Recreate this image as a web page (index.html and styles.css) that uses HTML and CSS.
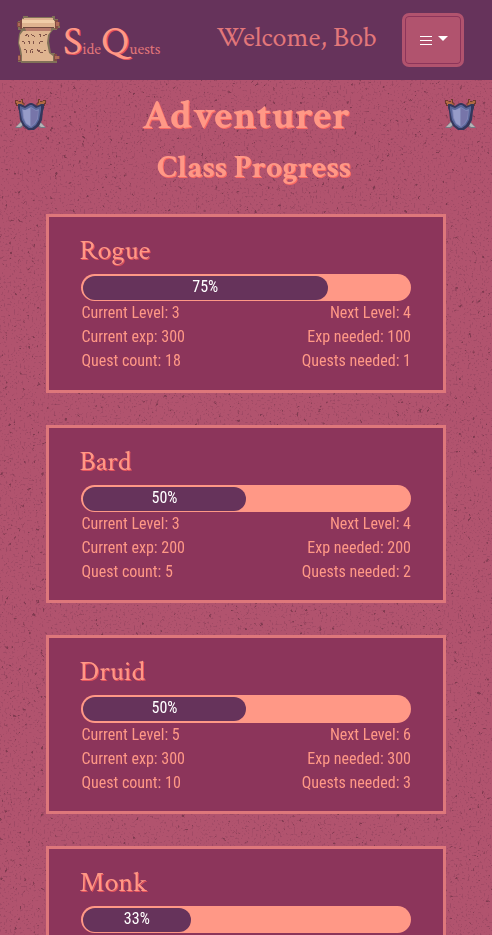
FILE: index.html
```html
<!DOCTYPE html>
<html lang="en">
<head>
<meta charset="utf-8">
<title>SideQuests</title>
<link rel="stylesheet" href="styles.css">
</head>
<body>
<svg class="texture" aria-hidden="true">
  <filter id="fine" x="0" y="0" width="100%" height="100%" color-interpolation-filters="sRGB">
    <feTurbulence type="fractalNoise" baseFrequency="0.5" numOctaves="3" seed="4"/>
    <feColorMatrix values="0 0 0 0 .55  0 0 0 0 .25  0 0 0 0 .36  6 0 0 0 -3.5"/>
  </filter>
  <filter id="coarse" x="0" y="0" width="100%" height="100%" color-interpolation-filters="sRGB">
    <feTurbulence type="fractalNoise" baseFrequency="0.22" numOctaves="4" seed="9"/>
    <feColorMatrix values="0 0 0 0 .44  0 0 0 0 .2  0 0 0 0 .28  10 0 0 0 -7.15"/>
  </filter>
  <rect width="100%" height="100%" filter="url(#fine)" opacity=".5"/>
  <rect width="100%" height="100%" filter="url(#coarse)" opacity=".75"/>
</svg>
<svg class="defs" aria-hidden="true">
  <symbol id="shield" viewBox="0 0 31 31">
    <path fill="#70392f" d="M0 1h3v1h3V0h2v3l2 2-4 4-3-2H1V5H0zM31 1h-3v1h-3V0h-2v3l-2 2 4 4 3-2h2V5h1z"/>
    <path fill="#b26b43" d="M1 2h2l1 1h2V1h1v3l2 1-3 3-2-2H2V4H1zM30 2h-2l-1 1h-2V1h-1v3l-2 1 3 3 2-2h2V4h1z"/>
    <path fill="#777783" d="M0 29l7-8 4 3-5 5zM31 29l-7-8-4 3 5 5z"/>
    <path fill="#b5b4b6" d="M1 28l6-6 3 2-5 4zM30 28l-6-6-3 2 5 4z"/>
    <path fill="#34375c" d="M3 5h3l4 2 3-2 2-1h2l2 1 3 2 4-2h3v4l-1 3-1 9-3 6-5 4h-6l-5-4-3-6-1-9-1-3z"/>
    <path fill="#59669a" d="M5 7l5 2 5-3h2l4 3 5-2v4l-2 10-3 5-4 3h-3l-4-3-3-5L5 11z"/>
    <path fill="#8286b6" d="M7 10l3 1 6-3 5 3 3-1-1 10-3 5-4 3-5-3-3-6z"/>
    <path fill="#969cc9" d="M8 11h3l4-2v18l-4-3-2-5z"/>
    <path fill="#7775a9" d="M16 9l5 3h2l-1 8-3 5-3 2z"/>
  </symbol>
</svg>

<header class="navbar">
  <a class="brand">
    <svg class="scroll" viewBox="0 0 44 47" aria-hidden="true">
      <path fill="#817158" d="M5 2h1V0h5v1h24V0h3v3h3v3h2v6h-3v2h-4l-3 4-1 7 2 12h4v3h2v7h-4v2H4v-3H1v-5h2v-5L1 27l1-9 2-4H1V5h4z"/>
      <path fill="#824c43" d="M3 4h2v9H3zM0 6h3v5H0zM38 4h3v2h2v4h-2v3h-3zM1 39h3v6H1zM37 38h3v2h3v3h-3v2h-3z"/>
      <path fill="#b06a59" d="M1 7h2v3H1zM39 6h3v4h-3zM1 40h2v4H1zM38 40h4v3h-4z"/>
      <path fill="#dfb490" d="M5 3h2V2h29v3h2v7H5zM6 15h28l-3 4-1 8 2 10 4 3v5H5v-6l-1-6-2-6 1-8z"/>
      <path fill="#f0cda8" d="M5 4h32v3H5z"/>
      <path fill="#70483f" d="M6 11h31v1H6z"/>
      <path fill="#b67a6b" d="M8 12h26v3H9z"/>
      <path fill="#805348" d="M8 19h2v1H8zM9 18h2v1H9zM11 19h1v2h-1zM14 18h1v1h-1zM15 19h2v1h-2zM17 20h1v1h-1zM22 18h2v1h-2zM23 19h1v2h-1zM26 19h2v1h-2zM28 18h2v1h-2zM5 25h2v1H5zM7 26h1v2H7zM11 25h2v1h-2zM12 26h1v2h-1zM16 25h1v3h-1zM22 26h1v2h-1zM23 25h3v1h-3zM7 33h2v1H7zM9 34h1v3H9zM13 34h1v3h-1zM14 33h2v1h-2zM15 35h1v2h-1zM20 33h1v2h-1zM21 34h2v2h-2zM23 36h3v1h-3zM27 34h2v1h-2z"/>
    </svg>
    <span class="wordmark"><b>S</b><span class="ide">ide</span><b class="q">Q</b><span class="uests">uests</span></span>
  </a>
  <span class="welcome">Welcome, Bob</span>
  <button class="menu" aria-label="Menu">
    <svg class="bars" viewBox="0 0 12 9" aria-hidden="true"><path d="M0 .5h12M0 4.5h12M0 8.5h12"/></svg>
    <span class="caret"></span>
  </button>
</header>

<main>
  <section class="hero">
    <svg class="shield"><use href="#shield"/></svg>
    <div class="titles">
      <h1>Adventurer</h1>
      <h2>Class Progress</h2>
    </div>
    <svg class="shield"><use href="#shield"/></svg>
  </section>

  <section class="cards">
    <article class="card">
      <h3>Rogue</h3>
      <div class="progress"><div class="fill" style="width:75%"><span>75%</span></div></div>
      <div class="stats"><p>Current Level: 3</p><p>Next Level: 4</p><p>Current exp: 300</p><p>Exp needed: 100</p><p>Quest count: 18</p><p>Quests needed: 1</p></div>
    </article>
    <article class="card">
      <h3>Bard</h3>
      <div class="progress"><div class="fill" style="width:50%"><span>50%</span></div></div>
      <div class="stats"><p>Current Level: 3</p><p>Next Level: 4</p><p>Current exp: 200</p><p>Exp needed: 200</p><p>Quest count: 5</p><p>Quests needed: 2</p></div>
    </article>
    <article class="card">
      <h3>Druid</h3>
      <div class="progress"><div class="fill" style="width:50%"><span>50%</span></div></div>
      <div class="stats"><p>Current Level: 5</p><p>Next Level: 6</p><p>Current exp: 300</p><p>Exp needed: 300</p><p>Quest count: 10</p><p>Quests needed: 3</p></div>
    </article>
    <article class="card">
      <h3>Monk</h3>
      <div class="progress"><div class="fill" style="width:33%"><span>33%</span></div></div>
    </article>
  </section>
</main>
</body>
</html>
```
FILE: styles.css
```css
* { box-sizing: border-box; }
html, body { height: 100%; }
body {
  margin: 0;
  overflow: hidden;
  background: #b1536e;
  color: #ff9886;
  font: 16px/24px "Roboto Condensed", Roboto, sans-serif;
  font-stretch: 75%;
}
h1, h2, h3, p { margin: 0; }
.texture { position: fixed; inset: 0; width: 100%; height: 100%; z-index: -1; }
.defs { position: absolute; width: 0; height: 0; }

.navbar {
  display: flex;
  align-items: center;
  height: 80px;
  padding: 0 28px 0 17px;
  background: #66335b;
  font-family: "Crimson Text", "Liberation Serif", serif;
  font-stretch: normal;
}
.brand { display: flex; align-items: center; width: 199.5px; }
.scroll { width: 44px; height: 47px; flex: none; margin-top: -2px; }
.wordmark { display: flex; align-items: baseline; margin-left: 2px; padding-top: 12px; font-size: 16px; line-height: 48px; }
.wordmark b { font-size: 40px; font-weight: 400; text-shadow: 1px 1px #e4545c; }
.wordmark .ide, .wordmark .uests { color: #e2777a; }
.welcome { width: 185.5px; padding-bottom: 4px; font-size: 28px; line-height: 34px; color: #e2777a; white-space: nowrap; }
.menu {
  display: flex;
  align-items: center;
  justify-content: center;
  gap: 6px;
  width: 62px;
  height: 54px;
  padding: 0 0 0 2px;
  border: 3px solid #b1536e;
  border-radius: 7px;
  background: #b1536e;
  box-shadow: inset 0 0 0 1px #8c355b;
}
.bars { width: 12px; height: 9px; fill: none; stroke: #fff; shape-rendering: crispEdges; }
.caret { margin-bottom: 4px; border: 5px solid transparent; border-top-color: #fff; border-bottom: 0; }

.hero { display: flex; justify-content: space-between; height: 134px; padding: 19px 16px 0 15px; }
.shield { width: 31px; height: 31px; flex: none; }
.titles { margin-top: -7px; text-align: center; font-family: "Crimson Text", "Liberation Serif", serif; font-stretch: normal; text-shadow: 1px 1px #fb6a63; }
h1 { padding-left: 1.5px; font-size: 40px; line-height: 48px; letter-spacing: .3px; }
h2 { margin-top: 9px; padding-left: 17px; font-size: 32px; line-height: 38px; }

.cards { display: flex; flex-direction: column; gap: 32px; width: 400px; margin: 0 auto; }
.card { height: 178.6px; flex: none; padding: 17px 32px 15px; border: 3px solid #de777b; background: #8c355b; }
.card h3 {
  margin: 0 0 6.6px -1.5px;
  font: 400 28px/33.6px "Crimson Text", "Liberation Serif", serif;
  text-shadow: 1px 1px #e4545c;
}
.progress { height: 27.2px; padding: 2px 2px 1px; border-radius: 14px; background: #ff9886; }
.fill { height: 24px; border-radius: 12px; background: #66335b; color: #fff; line-height: 22.2px; text-align: center; }
.stats { display: grid; grid-template-columns: 1fr 1fr; padding-left: .4px; }
.stats p:nth-child(even) { text-align: right; }
```
